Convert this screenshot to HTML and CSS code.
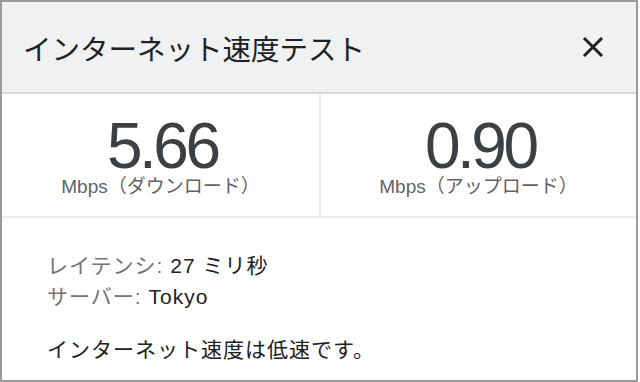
FILE: index.html
```html
<!DOCTYPE html>
<html lang="ja">
<head>
  <meta charset="UTF-8" />
  <meta name="viewport" content="width=device-width, initial-scale=1.0"/>
  <title>インターネット速度テスト</title>
  <link rel="stylesheet" href="styles.css">
</head>
<body>

  <div class="card">
    <header class="card-header">
      <h1>インターネット速度テスト</h1>
      <button class="close" aria-label="閉じる">
        <svg width="22" height="22" viewBox="0 0 22 22">
          <path d="M2 2 L20 20 M20 2 L2 20" stroke="#202124" stroke-width="3" fill="none"/>
        </svg>
      </button>
    </header>

    <div class="speeds">
      <div class="speed">
        <div class="value">5.66</div>
        <div class="unit">Mbps（ダウンロード）</div>
      </div>
      <div class="speed">
        <div class="value">0.90</div>
        <div class="unit">Mbps（アップロード）</div>
      </div>
    </div>

    <div class="details">
      <div class="row"><span class="label">レイテンシ:</span> 27 ミリ秒</div>
      <div class="row"><span class="label">サーバー:</span> Tokyo</div>
      <p class="summary">インターネット速度は低速です。</p>
    </div>
  </div>

</body>
</html>
```

FILE: styles.css
```css
body {
  font-family: 'Liberation Sans', 'Noto Sans CJK JP', sans-serif;
  background-color: #ffffff;
  margin: 0;
  padding: 0;
  color: #202124;
}

.card {
  width: 638px;
  height: 382px;
  box-sizing: border-box;
  border: 2px solid #9a9a9a;
  background: white;
  display: flex;
  flex-direction: column;
}

.card-header {
  height: 90px;
  background-color: #f0f1f3;
  border-bottom: 2px solid #dadada;
  display: flex;
  align-items: center;
  justify-content: space-between;
  padding: 0 32px 0 21px;
}

.card-header h1 {
  margin: 0;
  font-size: 28.5px;
  font-weight: normal;
  color: #202124;
}

.close {
  background: none;
  border: none;
  padding: 0;
  display: flex;
}

.speeds {
  display: grid;
  grid-template-columns: 1fr 1fr;
  height: 122px;
  border-bottom: 2px solid #ececec;
}

.speed {
  display: flex;
  flex-direction: column;
  align-items: center;
  padding-top: 21px;
}

.speed + .speed {
  border-left: 2px solid #ececec;
}

.value {
  font-size: 64px;
  line-height: 62px;
  letter-spacing: -3.5px;
  margin-right: -3.5px;
  color: #3c4043;
}

.unit {
  font-size: 19px;
  line-height: 20px;
  color: #5f6368;
}

.details {
  padding: 32px 45px 0;
  font-size: 21px;
  letter-spacing: 1px;
  color: #202124;
}

.row {
  line-height: 31px;
}

.label {
  color: #70757a;
}

.summary {
  margin: 21px 0 0;
}
```
